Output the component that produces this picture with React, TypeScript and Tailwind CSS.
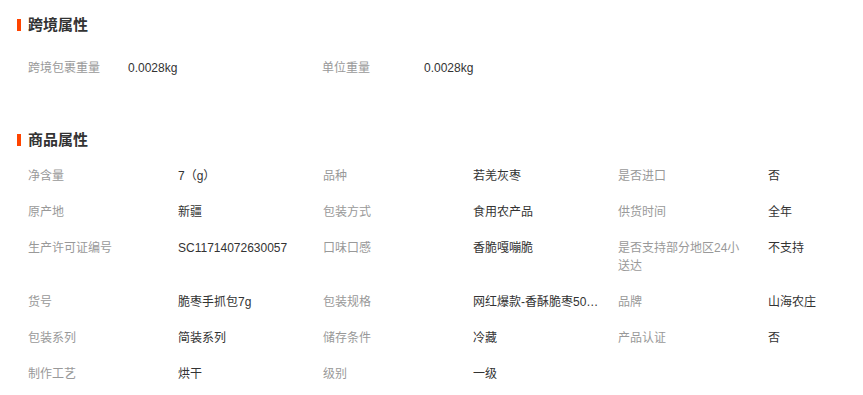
import React from "react";

const font = { fontFamily: '"Liberation Sans", "Noto Sans CJK SC", sans-serif' };

function Title({ text }: { text: string }) {
  return (
    <div className="flex items-center h-[20px]">
      <div className="w-[4px] h-[12px] bg-[#ff4400] mr-[7px]" />
      <div className="text-[15px] font-bold leading-[20px] text-[#333]">{text}</div>
    </div>
  );
}

type Pair = [string, string];

const rows: Pair[][] = [
  [["净含量", "7（g）"], ["品种", "若羌灰枣"], ["是否进口", "否"]],
  [["原产地", "新疆"], ["包装方式", "食用农产品"], ["供货时间", "全年"]],
  [["生产许可证编号", "SC11714072630057"], ["口味口感", "香脆嘎嘣脆"], ["是否支持部分地区24小送达", "不支持"]],
  [["货号", "脆枣手抓包7g"], ["包装规格", "网红爆款-香酥脆枣500g"], ["品牌", "山海农庄"]],
  [["包装系列", "简装系列"], ["储存条件", "冷藏"], ["产品认证", "否"]],
  [["制作工艺", "烘干"], ["级别", "一级"]],
];

export default function App() {
  return (
    <div className="w-[863px] h-[395px] overflow-hidden bg-white pl-[17px] pt-[15px] text-[12px]" style={font}>
      <Title text="跨境属性" />
      <div className="mt-[15px] pl-[11px] flex py-[9px] leading-[18px]">
        <div className="w-[100px] text-[#999]">跨境包裹重量</div>
        <div className="w-[194px] text-[#333]">0.0028kg</div>
        <div className="w-[102px] text-[#999]">单位重量</div>
        <div className="w-[194px] text-[#333]">0.0028kg</div>
      </div>
      <div className="mt-[44px]">
        <Title text="商品属性" />
      </div>
      <div className="mt-[8px] pl-[11px]">
        {rows.map((r, i) => (
          <div key={i} className="flex items-start py-[9px] leading-[18px]">
            {r.map(([k, v], j) => (
              <div key={j} className="flex items-start w-[295px] shrink-0">
                <div className="w-[150px] pr-5 text-[#999] break-all">{k}</div>
                <div className="w-[145px] pr-[19px] text-[#333] truncate">{v}</div>
              </div>
            ))}
          </div>
        ))}
      </div>
    </div>
  );
}
